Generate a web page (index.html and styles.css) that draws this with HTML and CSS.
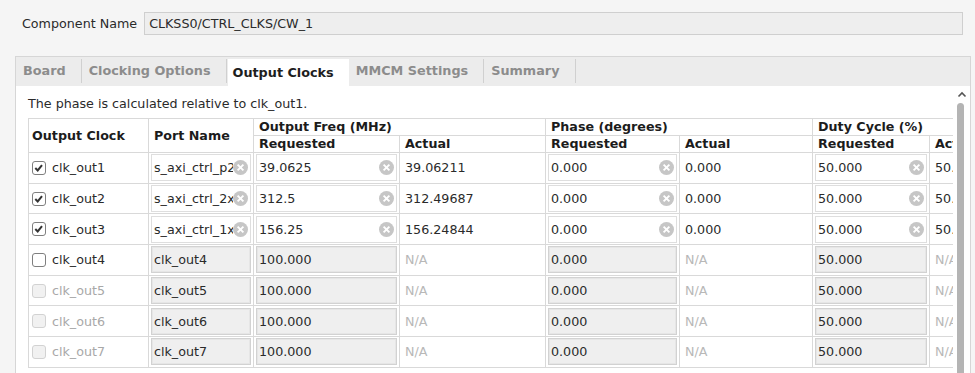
FILE: index.html
```html
<!DOCTYPE html>
<html lang="en">
<head>
    <meta charset="UTF-8">
    <title>Clocking Wizard - Output Clocks</title>
    <link rel="stylesheet" href="styles.css">
</head>
<body>
    <div class="name-row">
        <span class="name-label">Component Name</span>
        <div class="name-field">CLKSS0/CTRL_CLKS/CW_1</div>
    </div>

    <div class="panel">
        <div class="tabs">
            <div class="tab">Board</div>
            <div class="tab">Clocking Options</div>
            <div class="tab active">Output Clocks</div>
            <div class="tab">MMCM Settings</div>
            <div class="tab">Summary</div>
        </div>

        <div class="content">
            <div class="viewport">
                <p class="note">The phase is calculated relative to clk_out1.</p>
                <table class="clocks">
                    <colgroup>
                        <col class="w-clock">
                        <col class="w-port">
                        <col class="w-freq">
                        <col class="w-freq">
                        <col class="w-phase-req">
                        <col class="w-phase-act">
                        <col class="w-duty-req">
                        <col class="w-duty-act">
                    </colgroup>
                    <thead>
                        <tr class="group-row">
                            <th rowspan="2" class="first">Output Clock</th>
                            <th rowspan="2">Port Name</th>
                            <th colspan="2">Output Freq (MHz)</th>
                            <th colspan="2">Phase (degrees)</th>
                            <th colspan="2">Duty Cycle (%)</th>
                        </tr>
                        <tr class="sub-row">
                            <th>Requested</th>
                            <th>Actual</th>
                            <th>Requested</th>
                            <th>Actual</th>
                            <th>Requested</th>
                            <th>Actual</th>
                        </tr>
                    </thead>
                    <tbody id="rows"></tbody>
                </table>
            </div>
            <div class="scrollbar">
                <svg class="arrow" width="10" height="7" viewBox="0 0 10 7"><path d="M1.5 5.5 L5 2 L8.5 5.5" fill="none" stroke="#555" stroke-width="1.6"/></svg>
                <div class="thumb"></div>
            </div>
        </div>
    </div>

    <script>
        var clocks = [
            { name: 'clk_out1', on: true, port: 's_axi_ctrl_p2x_clk', freq: '39.0625', act: '39.06211', phase: '0.000', pact: '0.000', duty: '50.000', dact: '50.000' },
            { name: 'clk_out2', on: true, port: 's_axi_ctrl_2x_clk', freq: '312.5', act: '312.49687', phase: '0.000', pact: '0.000', duty: '50.000', dact: '50.000' },
            { name: 'clk_out3', on: true, port: 's_axi_ctrl_1x_clk', freq: '156.25', act: '156.24844', phase: '0.000', pact: '0.000', duty: '50.000', dact: '50.000' },
            { name: 'clk_out4', on: false, port: 'clk_out4', freq: '100.000', phase: '0.000', duty: '50.000' },
            { name: 'clk_out5', on: false, locked: true, port: 'clk_out5', freq: '100.000', phase: '0.000', duty: '50.000' },
            { name: 'clk_out6', on: false, locked: true, port: 'clk_out6', freq: '100.000', phase: '0.000', duty: '50.000' },
            { name: 'clk_out7', on: false, locked: true, port: 'clk_out7', freq: '100.000', phase: '0.000', duty: '50.000' }
        ];

        var clearIcon = '<svg class="clear" width="15" height="15" viewBox="0 0 15 15"><circle cx="7.5" cy="7.5" r="7.5" fill="#c6c6c6"/><path d="M4.6 4.6 L10.4 10.4 M10.4 4.6 L4.6 10.4" stroke="#fff" stroke-width="1.9"/></svg>';
        var tick = '<path d="M3.3 7 L5.7 9.4 L10 4.2" fill="none" stroke="#333" stroke-width="2"/>';

        function field(text, on) {
            if (on) {
                return '<td class="field-cell"><div class="field"><span class="val">' + text + '</span>' + clearIcon + '</div></td>';
            }
            return '<td class="field-cell"><div class="field off"><span class="val">' + text + '</span></div></td>';
        }

        function actual(text) {
            if (text) return '<td>' + text + '</td>';
            return '<td class="na">N/A</td>';
        }

        var html = '';
        clocks.forEach(function (c) {
            var box = '<svg class="check' + (c.locked ? ' locked' : '') + '" width="14" height="14" viewBox="0 0 14 14">' +
                '<rect x="0.5" y="0.5" width="13" height="13" rx="2.5"/>' + (c.on ? tick : '') + '</svg>';
            html += '<tr class="data-row">' +
                '<td class="first"><span class="clock' + (c.locked ? ' locked' : '') + '">' + box + c.name + '</span></td>' +
                field(c.port, c.on) +
                field(c.freq, c.on) + actual(c.act) +
                field(c.phase, c.on) + actual(c.pact) +
                field(c.duty, c.on) + actual(c.dact) +
                '</tr>';
        });
        document.getElementById('rows').innerHTML = html;
    </script>
</body>
</html>
```

FILE: styles.css
```css
body {
    margin: 0;
    background-color: #f5f5f5;
    font-family: "DejaVu Sans", Verdana, sans-serif;
    font-size: 12.7px;
    color: #2a2a2a;
    overflow: hidden;
    height: 373px;
}

.name-row {
    display: flex;
    align-items: center;
    padding: 12px 12px 0 22px;
}

.name-label {
    margin-right: 7px;
}

.name-field {
    flex: 1;
    height: 21px;
    line-height: 21px;
    padding-left: 4px;
    background-color: #eeeeee;
    border: 1px solid #cfcfcf;
}

.panel {
    margin: 21px 4px 0 15px;
    border: 1px solid #d6d6d6;
    background-color: #ececec;
}

.tabs {
    display: flex;
    align-items: flex-start;
    height: 27px;
    padding-top: 2px;
    font-weight: bold;
    font-size: 12.8px;
}

.tab {
    height: 24px;
    line-height: 24px;
    padding: 0 15px 0 7px;
    color: #8c8c8c;
    border-right: 1px solid #d0d0d0;
}

.tab.active {
    height: 27px;
    line-height: 27px;
    padding: 0 15px 0 5px;
    margin-left: 1px;
    color: #1e1e1e;
    background-color: #fff;
    border-right: none;
}

.content {
    display: flex;
    height: 300px;
    background-color: #fff;
}

.viewport {
    flex: 1;
    min-width: 0;
    overflow: hidden;
    padding: 10px 0 0 12px;
}

.note {
    margin: 0 0 6px 0;
    line-height: 16px;
}

.scrollbar {
    width: 17px;
    display: flex;
    flex-direction: column;
    background-color: #fff;
}

.arrow {
    margin: 5px 0 0 4px;
}

.thumb {
    flex: 1;
    width: 7px;
    margin: 5px 0 0 4px;
    border-radius: 4px 4px 0 0;
    background-color: #b4b4b4;
}

/* table */

.clocks {
    border-collapse: collapse;
    table-layout: fixed;
    width: 1021px;
}

.w-clock { width: 120px; }
.w-port { width: 105px; }
.w-freq { width: 146px; }
.w-phase-req { width: 134px; }
.w-phase-act { width: 133px; }
.w-duty-req { width: 117px; }
.w-duty-act { width: 120px; }

.clocks th,
.clocks td {
    border: 1px solid #d9d9d9;
    padding: 0 5px;
    text-align: left;
    white-space: nowrap;
    overflow: hidden;
}

.clocks th {
    height: 16px;
    line-height: 16px;
    color: #1c1c1c;
}

.clocks th.first,
.clocks td.first {
    padding-left: 3px;
}

.data-row td {
    height: 29.7px;
}

.clocks td.field-cell {
    padding: 0 2px;
}

.field {
    display: flex;
    align-items: center;
    height: 25px;
    padding: 0 2px 0 2px;
    background-color: #fff;
    border: 1px solid #dedede;
}

.field.off {
    background-color: #efefef;
    border-color: #d2d2d2;
    box-shadow: inset 0 0 0 1px #e6e6e6;
}

.val {
    flex: 1;
    min-width: 0;
    overflow: hidden;
}

.clear {
    flex-shrink: 0;
}

.na {
    color: #b8b8b8;
}

.clock {
    display: flex;
    align-items: center;
}

.clock.locked {
    color: #a8a8a8;
}

.check {
    margin-right: 6px;
}

.check rect {
    fill: #fff;
    stroke: #7f7f7f;
}

.check.locked rect {
    fill: #f1f1f1;
    stroke: #d2d2d2;
}
```
